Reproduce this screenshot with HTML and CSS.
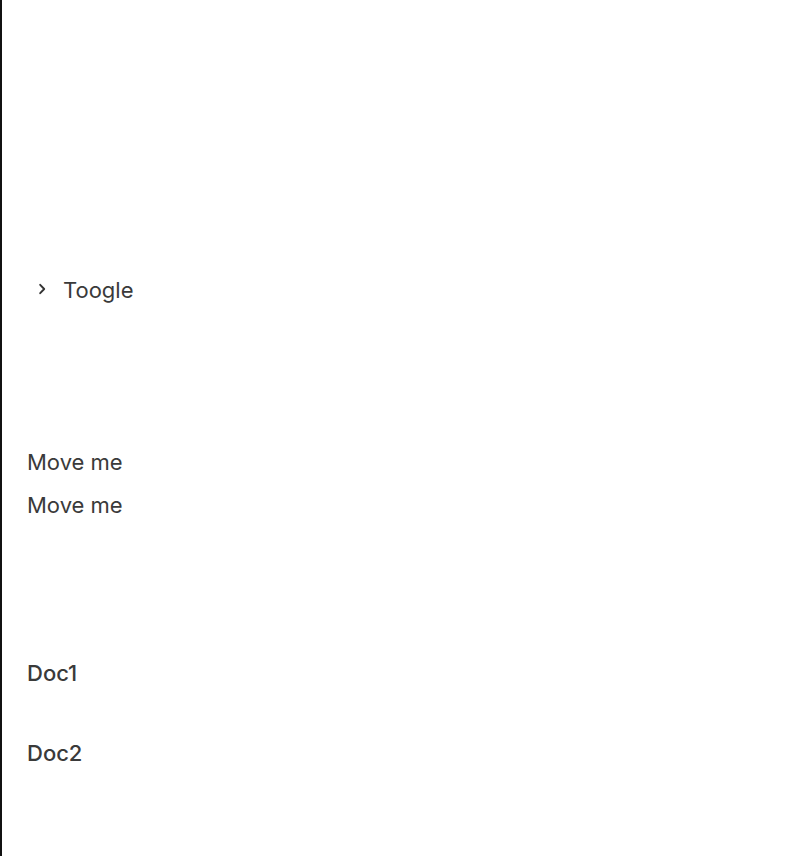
FILE: index.html
```html
<!DOCTYPE html>
<html>
<head>
<meta charset="utf-8">
<link rel="stylesheet" href="styles.css">
</head>
<body>
<main class="page">
  <div class="toggle">
    <span class="chev"><svg width="12" height="12" viewBox="0 0 12 12"><path d="M4.2 1.8 L8.2 6 L4.2 10.2" fill="none" stroke="#333" stroke-width="1.9" stroke-linecap="round" stroke-linejoin="round"/></svg></span>
    <span class="toggle-label">Toogle</span>
  </div>
  <div class="moves">
    <div class="item">Move me</div>
    <div class="item">Move me</div>
  </div>
  <div class="docs">
    <div class="doc">Doc1</div>
    <div class="doc">Doc2</div>
  </div>
</main>
</body>
</html>
```
FILE: styles.css
```css
html, body { margin: 0; padding: 0; background: #fff; }
body {
  font-family: Inter, "Noto Sans", sans-serif;
  color: #3a3a3a;
}
.page {
  border-left: 2px solid #111;
  min-height: 856px;
  box-sizing: border-box;
  padding: 276px 0 0 25px;
}
.toggle {
  display: flex;
  align-items: center;
  height: 28px;
  padding-left: 9px;
}
.chev { display: flex; width: 12px; height: 12px; margin-right: 15px; margin-top: -2px; }
.toggle-label { font-size: 22px; line-height: 28px; }
.moves {
  margin-top: 144px;
  display: flex;
  flex-direction: column;
  gap: 15px;
}
.item { font-size: 22px; line-height: 28px; }
.docs {
  margin-top: 140px;
  display: flex;
  flex-direction: column;
  gap: 52px;
}
.doc { font-size: 22px; line-height: 28px; font-weight: 500; }
```
